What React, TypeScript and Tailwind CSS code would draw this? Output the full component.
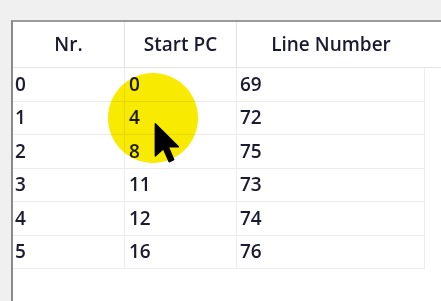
import React from "react";

const rows = [
  { nr: "0", pc: "0", line: "69" },
  { nr: "1", pc: "4", line: "72" },
  { nr: "2", pc: "8", line: "75" },
  { nr: "3", pc: "11", line: "73" },
  { nr: "4", pc: "12", line: "74" },
  { nr: "5", pc: "16", line: "76" },
];

export default function App() {
  return (
    <div
      className="relative w-[441px] h-[301px] overflow-hidden bg-[#f0f0f0] pt-[20px] pl-[11px] text-[#1a1a30] font-semibold"
      style={{ fontFamily: '"Open Sans", "Noto Sans", sans-serif' }}
    >
      <div className="h-full bg-white border-t-2 border-l-2 border-t-[#9a9a9a] border-l-[#8a8a8a]">
        {/* Header */}
        <div className="flex h-[46px] border-b border-[#e3e3e3]">
          <div className="w-[112px] flex items-center justify-center border-r border-[#e3e3e3] text-[19px]">
            Nr.
          </div>
          <div className="w-[112px] flex items-center justify-center border-r border-[#e3e3e3] text-[19px]">
            Start PC
          </div>
          <div className="w-[188px] flex items-center justify-center text-[19px]">
            Line Number
          </div>
        </div>

        {/* Rows */}
        {rows.map((r) => (
          <div key={r.nr} className="flex h-[33.5px] text-[19px] leading-none">
            <div className="w-[112px] flex items-center pl-[2px] border-r border-b border-[#ececec]">
              {r.nr}
            </div>
            <div className="w-[112px] flex items-center pl-[4px] border-r border-b border-[#ececec]">
              {r.pc}
            </div>
            <div className="w-[188px] flex items-center pl-[3px] border-r border-b border-[#ececec]">
              {r.line}
            </div>
          </div>
        ))}
      </div>

      {/* Cursor highlight */}
      <div className="absolute left-[108px] top-[73px] w-[90px] h-[90px] rounded-full bg-[#f8ea00] mix-blend-multiply" />
      <svg
        className="absolute left-[153px] top-[121px]"
        width="30"
        height="47"
        viewBox="0 0 13 20"
      >
        <path
          d="M1 1 L1 15 L4.5 11.8 L7 17.5 L9 16.6 L6.6 11 L11 11 Z"
          fill="#000"
          stroke="#000"
          strokeWidth="0.6"
          strokeLinejoin="round"
        />
      </svg>
    </div>
  );
}
